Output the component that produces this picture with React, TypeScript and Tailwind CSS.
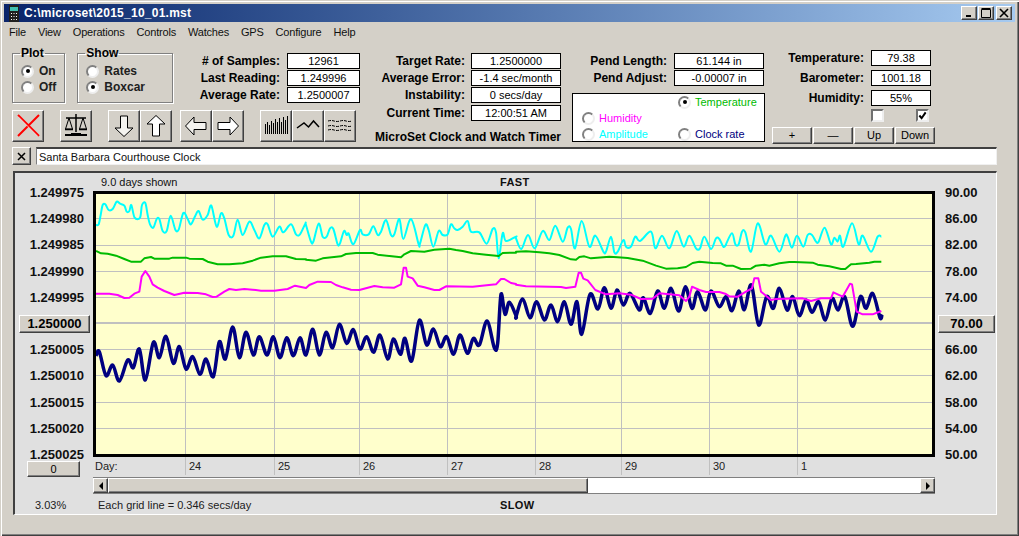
const BEVEL =
  "bg-[#d4d0c8] border border-t-white border-l-white border-r-[#404040] border-b-[#404040] shadow-[inset_-1px_-1px_0_#808080]";
const FONT = "font-['Liberation_Sans',Arial,sans-serif]";

const menus = ["File", "View", "Operations", "Controls", "Watches", "GPS", "Configure", "Help"];
const leftScale = ["1.249975", "1.249980", "1.249985", "1.249990", "1.249995", "1.250000", "1.250005", "1.250010", "1.250015", "1.250020", "1.250025"];
const rightScale = ["90.00", "86.00", "82.00", "78.00", "74.00", "70.00", "66.00", "62.00", "58.00", "54.00", "50.00"];
const days = [
  { label: "24", w: "w-[89px]" },
  { label: "25", w: "w-[85px]" },
  { label: "26", w: "w-[88px]" },
  { label: "27", w: "w-[88px]" },
  { label: "28", w: "w-[86px]" },
  { label: "29", w: "w-[88px]" },
  { label: "30", w: "w-[88px]" },
  { label: "1", w: "w-[138px]" },
];

const gridY = [218, 245, 271, 297, 349, 375, 402, 428];
const gridX = [185, 274, 359, 447, 535, 621, 709, 797];

type Pts = number[][];
// traces were read off 3x crops, each crop starts at ox and y 195
const crop = (ox: number, pts: Pts): Pts => pts.map(([x, y]) => [ox + x / 3, 195 + y / 3]);

const cyan: Pts = [
  ...crop(96, [[0,90],[8,88],[14,60],[20,30],[28,28],[38,45],[50,42],[62,20],[72,26],[85,32],[92,50],[100,48],[106,30],[116,68],[132,68],[138,30],[148,24],[155,60],[162,88],[172,98],[182,72],[190,72],[200,108],[212,108],[224,62],[238,104],[248,104],[262,54],[275,72],[285,88],[298,62],[308,48],[320,74],[335,60],[346,32],[362,95],[375,55],[385,70],[398,120],[412,122],[425,74],[440,120],[460,80],[475,105],[490,130],[505,90],[515,88],[530,125],[550,95],[562,112],[585,88],[600,118],[612,118],[628,86]]),
  ...crop(306, [[0,90],[15,140],[22,140],[38,86],[50,125],[62,125],[72,100],[82,102],[95,148],[102,145],[114,108],[122,120],[128,116],[142,148],[162,105],[170,118],[188,118],[202,94],[215,120],[225,110],[240,75],[255,120],[265,118],[280,72],[292,132],[315,72],[338,148],[342,146],[358,90],[368,105],[382,155],[398,108],[410,120],[425,118],[435,88],[445,100],[455,105],[470,95],[485,78],[495,110],[520,112],[542,146],[560,102],[570,112],[578,190],[590,115],[600,138],[630,125]]),
  ...crop(516, [[0,130],[16,162],[36,120],[56,160],[80,108],[100,135],[118,92],[140,140],[155,98],[165,102],[177,160],[197,78],[220,155],[238,122],[262,170],[270,170],[285,125],[295,172],[305,170],[322,135],[330,155],[345,155],[358,125],[372,138],[405,110],[418,160],[438,122],[460,160],[482,108],[503,155],[520,122],[540,160],[552,160],[565,125],[585,162],[600,130],[610,132],[622,155],[630,150]]),
  ...crop(726, [[0,148],[18,115],[28,148],[38,148],[48,110],[58,112],[75,170],[95,85],[118,148],[135,122],[160,170],[178,122],[185,125],[198,158],[213,122],[232,155],[245,120],[258,120],[270,140],[278,140],[296,98],[315,148],[325,128],[335,140],[342,122],[352,155],[378,85],[398,148],[410,122],[435,170],[455,125],[466,125]]),
];

const green: Pts = [
  ...crop(96, [[0,168],[15,175],[35,176],[60,182],[85,192],[105,200],[135,200],[145,190],[165,186],[175,191],[220,191],[230,188],[270,188],[280,191],[320,192],[335,200],[365,208],[400,208],[440,205],[470,197],[495,188],[530,184],[570,184],[600,192],[630,193]]),
  ...crop(306, [[0,194],[30,197],[50,190],[105,184],[120,177],[150,174],[200,174],[215,179],[285,187],[295,178],[315,168],[355,170],[385,164],[430,161],[450,165],[470,168],[500,175],[540,179],[578,183],[590,174],[630,173]]),
  ...crop(516, [[0,170],[30,169],[70,172],[100,175],[130,180],[165,193],[180,194],[190,186],[205,184],[225,190],[280,185],[305,187],[335,189],[380,197],[420,212],[450,221],[485,220],[510,216],[530,204],[550,200],[590,204],[615,205],[630,212]]),
  ...crop(726, [[0,212],[20,212],[45,222],[75,221],[90,212],[115,209],[130,212],[160,205],[190,201],[205,201],[260,203],[275,209],[310,214],[345,222],[358,222],[375,208],[390,207],[430,203],[445,200],[466,200]]),
];

const magenta: Pts = [
  ...crop(96, [[0,296],[40,296],[65,300],[85,309],[100,308],[115,296],[130,290],[137,245],[148,228],[160,245],[170,268],[185,278],[205,288],[235,300],[265,293],[305,294],[330,298],[350,306],[362,305],[385,290],[400,282],[420,285],[445,282],[470,284],[495,287],[535,287],[575,282],[597,272],[630,279]]),
  ...crop(306, [[0,279],[10,270],[35,260],[75,261],[90,270],[110,277],[135,284],[160,285],[205,273],[230,277],[265,278],[285,268],[293,218],[300,218],[305,245],[320,250],[335,272],[355,277],[385,285],[400,285],[420,274],[500,275],[570,268],[585,252],[595,252],[615,264],[630,267]]),
  ...crop(516, [[0,269],[30,274],[135,276],[150,279],[178,275],[188,233],[195,233],[202,251],[215,256],[238,285],[270,298],[310,295],[345,299],[375,312],[410,311],[430,295],[490,301],[510,318],[520,305],[528,275],[550,285],[570,291],[610,291],[630,297]]),
  ...crop(726, [[0,297],[10,304],[35,305],[60,290],[78,280],[85,250],[97,250],[105,290],[120,302],[135,315],[150,312],[230,310],[255,318],[285,310],[315,310],[322,292],[350,305],[372,266],[378,268],[392,350],[410,358],[440,358],[466,348]]),
];

const navy: Pts = [
  ...crop(96, [[0,482],[10,470],[30,542],[50,510],[70,558],[95,495],[112,518],[130,462],[148,555],[172,442],[190,488],[210,424],[232,505],[250,455],[270,522],[290,485],[312,538],[330,492],[352,545],[370,440],[388,492],[410,396],[430,488],[450,412],[472,480],[490,425],[513,480],[532,425],[552,488],[572,428],[592,482],[612,428]]),
  ...crop(306, [[0,480],[20,403],[40,480],[60,412],[80,458],[100,388],[122,445],[142,404],[162,462],[182,425],[203,472],[222,420],[245,492],[262,432],[283,478],[297,430],[317,498],[340,376],[362,450],[382,402],[403,455],[422,425],[443,478],[462,420],[484,475],[502,430],[520,450],[543,378],[565,458],[575,445],[585,298],[597,358],[610,322],[630,362]]),
  ...crop(516, [[0,365],[20,312],[42,368],[62,320],[85,375],[105,330],[125,380],[145,320],[165,388],[183,320],[197,418],[222,298],[246,342],[265,278],[285,340],[303,285],[322,330],[342,295],[370,345],[382,308],[403,355],[425,288],[445,340],[465,280],[488,348],[508,275],[528,340],[545,290],[568,345],[585,288],[610,335]]),
  ...crop(726, [[0,305],[18,347],[38,288],[55,344],[76,270],[98,390],[122,305],[142,340],[160,280],[183,345],[200,305],[220,362],[240,315],[258,352],[278,320],[298,375],[318,310],[336,345],[356,305],[380,394],[403,305],[420,340],[440,295],[462,368],[468,358]]),
];

const toPoints = (pts: Pts) => pts.map((p) => p.join(",")).join(" ");

// catmull-rom, the navy and cyan traces are rounder than the others
function smooth(pts: Pts) {
  let d = `M${pts[0][0]} ${pts[0][1]}`;
  for (let i = 0; i < pts.length - 1; i++) {
    const a = pts[Math.max(i - 1, 0)];
    const b = pts[i];
    const c = pts[i + 1];
    const e = pts[Math.min(i + 2, pts.length - 1)];
    d += ` C${b[0] + (c[0] - a[0]) / 6} ${b[1] + (c[1] - a[1]) / 6} ${c[0] - (e[0] - b[0]) / 6} ${c[1] - (e[1] - b[1]) / 6} ${c[0]} ${c[1]}`;
  }
  return d;
}

function Field({ label, value, w = "w-[73px]", gap = "gap-[7px]" }: { label: string; value: string; w?: string; gap?: string }) {
  return (
    <div className={`flex justify-end items-center h-[16px] ${gap}`}>
      <span className="text-[12px] leading-[16px] font-bold text-black whitespace-nowrap">{label}</span>
      <div className={`${w} h-[16px] border border-black bg-white flex items-center justify-center text-[11px] leading-[14px] text-black whitespace-nowrap`}>
        {value}
      </div>
    </div>
  );
}

function Radio({ checked }: { checked?: boolean }) {
  return (
    <span className="w-[13px] h-[13px] shrink-0 rounded-full bg-white border-2 border-t-[#808080] border-l-[#808080] border-r-[#eeeeee] border-b-[#eeeeee] flex items-center justify-center">
      {checked && <span className="w-[4px] h-[4px] rounded-full bg-black" />}
    </span>
  );
}

function BoldRadio({ label, checked }: { label: string; checked?: boolean }) {
  return (
    <div className="flex items-center gap-[5px] h-[16px]">
      <Radio checked={checked} />
      <span className="text-[12px] leading-[16px] font-bold text-[#202020]">{label}</span>
    </div>
  );
}

function ColorRadio({ label, color, checked }: { label?: string; color?: string; checked?: boolean }) {
  if (!label) return <div className="h-[16px]" />;
  return (
    <div className="flex items-center gap-[4px] h-[16px]">
      <Radio checked={checked} />
      <span className={`text-[11px] leading-[16px] ${color}`}>{label}</span>
    </div>
  );
}

function Group({ title, w, children }: { title: string; w: string; children: React.ReactNode }) {
  return (
    <fieldset className={`${w} h-[57px] border border-[#808080] shadow-[1px_1px_0_#fff,inset_1px_1px_0_#fff] px-[8px]`}>
      <legend className="text-[12px] font-bold text-black px-[1px] -ml-[1px] leading-[14px]">{title}</legend>
      <div className="pt-[3px]">{children}</div>
    </fieldset>
  );
}

function ToolBtn({ children }: { children: React.ReactNode }) {
  return (
    <button className={`${BEVEL} w-[32px] h-[32px] p-0 flex items-center justify-center`}>
      <svg width="30" height="30" viewBox="1 1 30 30">{children}</svg>
    </button>
  );
}

function SmallBtn({ label, w, h = "h-[17px]", bold }: { label: string; w: string; h?: string; bold?: boolean }) {
  return (
    <button className={`${BEVEL} ${w} ${h} p-0 flex items-center justify-center text-black ${bold ? "text-[13px] font-bold" : "text-[11px]"}`}>
      {label}
    </button>
  );
}

function CheckBox({ checked }: { checked?: boolean }) {
  return (
    <span className="w-[13px] h-[13px] bg-white border-2 border-t-[#707070] border-l-[#707070] border-r-[#eeeeee] border-b-[#eeeeee] flex items-center justify-center">
      {checked && (
        <svg width="9" height="9" viewBox="0 0 10 10">
          <path d="M1.500 5 L4 8 L8.500 1.500" fill="none" stroke="black" strokeWidth="2.200" />
        </svg>
      )}
    </span>
  );
}

function WinBtn({ children }: { children: React.ReactNode }) {
  return (
    <button className={`${BEVEL} w-[16px] h-[14px] p-0 flex items-center justify-center`}>
      <svg width="10" height="10" viewBox="0 0 10 10">{children}</svg>
    </button>
  );
}

function Plot() {
  return (
    <div className="w-[842px] h-[266px] border-[3px] border-black bg-[#ffffcc]">
      <svg width="836" height="260" viewBox="96 194 836 260" className="block">
        {gridY.map((y) => (
          <line key={y} x1="96" x2="932" y1={y} y2={y} stroke="#c0c0c0" strokeWidth="1" shapeRendering="crispEdges" />
        ))}
        <line x1="96" x2="932" y1="323" y2="323" stroke="#c0c0c0" strokeWidth="2" shapeRendering="crispEdges" />
        {gridX.map((x) => (
          <line key={x} x1={x} x2={x} y1="194" y2="454" stroke="#c0c0c0" strokeWidth="1" shapeRendering="crispEdges" />
        ))}
        <path d={smooth(cyan)} fill="none" stroke="#00ffff" strokeWidth="2" strokeLinejoin="round" />
        <polyline points={toPoints(green)} fill="none" stroke="#00bb00" strokeWidth="2" strokeLinejoin="round" />
        <path d={smooth(navy)} fill="none" stroke="#000080" strokeWidth="3.500" strokeLinejoin="round" />
        <polyline points={toPoints(magenta)} fill="none" stroke="#ff00ff" strokeWidth="2" strokeLinejoin="round" />
      </svg>
    </div>
  );
}

export default function App() {
  return (
    <div className={`${FONT} w-[1019px] h-[536px] overflow-hidden bg-[#d4d0c8] pt-[4px] px-[4px] shadow-[inset_1px_1px_0_#d4d0c8,inset_2px_2px_0_#ffffff,inset_-1px_-1px_0_#404040,inset_-2px_-2px_0_#808080]`}>
      {/* title bar */}
      <div className="w-[1011px] h-[18px] bg-gradient-to-r from-[#0a246a] to-[#a6caf0] flex items-center pl-[4px] pr-[3px]">
        <svg width="12" height="17" viewBox="0 0 12 17" className="shrink-0">
          <rect x="1" y="0" width="10" height="17" fill="#202020" />
          <rect x="2" y="2" width="8" height="4" fill="#40c0b0" />
          <path d="M3 8h1v1H3zM5.500 8h1v1h-1zM8 8h1v1H8zM3 11h1v1H3zM5.500 11h1v1h-1zM8 11h1v1H8zM3 14h1v1H3zM5.500 14h1v1h-1zM8 14h1v1H8z" fill="#ffffff" />
        </svg>
        <span className="ml-[4px] text-[12px] font-bold text-white whitespace-nowrap tracking-[0.25px]">C:\microset\2015_10_01.mst</span>
        <div className="ml-auto flex">
          <WinBtn><rect x="2" y="7" width="5" height="2" fill="black" /></WinBtn>
          <div className="ml-[1px]">
            <WinBtn><path d="M0.500 1.500h9v8h-9zM0.500 0.500h9" fill="none" stroke="black" /></WinBtn>
          </div>
          <div className="ml-[2px]">
            <WinBtn><path d="M1 1 L9 9 M9 1 L1 9" stroke="black" strokeWidth="1.600" /></WinBtn>
          </div>
        </div>
      </div>

      {/* menu */}
      <div className="h-[20px] flex items-center pl-[5px] gap-[12px] text-[11px] tracking-[-0.2px] text-[#101010]">
        {menus.map((m) => (
          <span key={m}>{m}</span>
        ))}
      </div>

      {/* controls */}
      <div className="flex items-start h-[101px] pl-[8px] mt-[4px]">
        <div className="w-[348px]">
          <div className="flex h-[57px]">
            <Group title="Plot" w="w-[52px]">
              <BoldRadio label="On" checked />
              <BoldRadio label="Off" />
            </Group>
            <div className="ml-[12px]">
              <Group title="Show" w="w-[96px]">
                <BoldRadio label="Rates" />
                <BoldRadio label="Boxcar" checked />
              </Group>
            </div>
            <div className="flex-1 pt-[7px] flex flex-col gap-[1px]">
              <Field label="# of Samples:" value="12961" />
              <Field label="Last Reading:" value="1.249996" />
              <Field label="Average Rate:" value="1.2500007" />
            </div>
          </div>
          <div className="flex mt-[7px]">
            <ToolBtn>
              <path d="M6 5 L27 26 M27 5 L6 26" stroke="#ff0000" strokeWidth="2" />
              <path d="M6 6.500 L26 26.500" stroke="#ffffff" strokeWidth="0.600" />
            </ToolBtn>
            <div className="ml-[16px]">
              <ToolBtn>
                <path d="M16 4 V22 M6 8 H26" stroke="black" strokeWidth="1.500" fill="none" />
                <path d="M9 8 L5.500 19 H12.500 Z M23 8 L19.500 19 H26.500 Z" stroke="black" fill="none" />
                <path d="M5 19.500 H13 M19 19.500 H27" stroke="black" strokeWidth="1.500" />
                <path d="M5 24 H27 V26 H5 Z" fill="black" />
                <path d="M11 23 H21 V24 H11 Z" fill="black" />
              </ToolBtn>
            </div>
            <div className="ml-[16px] flex">
              <ToolBtn>
                <polygon points="12.500,6 19.500,6 19.500,18 25,18 16,26.500 7,18 12.500,18" fill="#f4f3ef" stroke="black" />
              </ToolBtn>
              <ToolBtn>
                <polygon points="12.500,26 19.500,26 19.500,14 25,14 16,5.500 7,14 12.500,14" fill="#ffffff" stroke="black" />
              </ToolBtn>
            </div>
            <div className="ml-[8px] flex">
              <ToolBtn>
                <polygon points="26,12.500 26,19.500 14,19.500 14,25 5.500,16 14,7 14,12.500" fill="#f4f3ef" stroke="black" />
              </ToolBtn>
              <ToolBtn>
                <polygon points="6,12.500 6,19.500 18,19.500 18,25 26.500,16 18,7 18,12.500" fill="#ffffff" stroke="black" />
              </ToolBtn>
            </div>
            <div className="ml-[16px] flex">
              <ToolBtn>
                <path
                  d="M5.500 24V14 M7.500 24V12 M9.500 24V15 M11.500 24V11 M13.500 24V13 M15.500 24V9 M17.500 24V12 M19.500 24V8 M21.500 24V12 M23.500 24V7 M25.500 24V10 M27.500 24V6"
                  stroke="black"
                  fill="none"
                />
              </ToolBtn>
              <ToolBtn>
                <polyline points="5,18 12,13 16.500,17 21.500,11 27,17" stroke="black" strokeWidth="1.500" fill="none" />
              </ToolBtn>
              <ToolBtn>
                <path
                  d="M4 11 q3 -1 6 0 t6 0 t6 0 t6 0 M4 16 q3 -1 6 0 t6 0 t6 0 t6 0 M4 20 q3 -1 6 0 t6 0 t6 0 t6 0"
                  stroke="black"
                  strokeDasharray="3 1"
                  fill="none"
                />
              </ToolBtn>
            </div>
          </div>
        </div>

        <div className="w-[197px] ml-[4px] pt-[7px] flex flex-col gap-[1px]">
          <Field label="Target Rate:" value="1.2500000" w="w-[90px]" gap="gap-[6px]" />
          <Field label="Average Error:" value="-1.4 sec/month" w="w-[90px]" gap="gap-[6px]" />
          <Field label="Instability:" value="0 secs/day" w="w-[90px]" gap="gap-[6px]" />
          <div className="mt-[1px]">
            <Field label="Current Time:" value="12:00:51 AM" w="w-[90px]" gap="gap-[6px]" />
          </div>
          <div className="mt-[8px] text-[12px] leading-[14px] font-bold text-black text-right whitespace-nowrap">
            MicroSet Clock and Watch Timer
          </div>
        </div>

        <div className="w-[193px] ml-[11px] pt-[7px] flex flex-col gap-[1px]">
          <div className="pr-[1px] flex flex-col gap-[1px]">
            <Field label="Pend Length:" value="61.144 in" w="w-[90px]" />
            <Field label="Pend Adjust:" value="-0.00007 in" w="w-[90px]" />
          </div>
          <div className="mt-[6px] h-[49px] border border-black bg-white grid grid-cols-[96px_1fr] pl-[9px]">
            <ColorRadio />
            <ColorRadio label="Temperature" color="text-[#00bb00]" checked />
            <ColorRadio label="Humidity" color="text-[#ff00ff]" />
            <ColorRadio />
            <ColorRadio label="Amplitude" color="text-[#00ffff]" />
            <ColorRadio label="Clock rate" color="text-[#000080]" />
          </div>
        </div>

        <div className="w-[163px] ml-[7px] pt-[4px]">
          <div className="pr-[4px] flex flex-col gap-[4px]">
            <Field label="Temperature:" value="79.38" w="w-[60px]" />
            <Field label="Barometer:" value="1001.18" w="w-[60px]" />
            <Field label="Humidity:" value="55%" w="w-[60px]" />
          </div>
          <div className="flex mt-[3px] pl-[99px] gap-[32px]">
            <CheckBox />
            <CheckBox checked />
          </div>
          <div className="flex gap-[1px] mt-[5px]">
            <SmallBtn label="+" w="w-[40px]" />
            <SmallBtn label="—" w="w-[40px]" />
            <SmallBtn label="Up" w="w-[40px]" />
            <SmallBtn label="Down" w="w-[40px]" />
          </div>
        </div>
      </div>

      {/* note line */}
      <div className="flex items-center gap-[5px] pl-[8px]">
        <button className={`${BEVEL} w-[19px] h-[18px] p-0 flex items-center justify-center`}>
          <svg width="9" height="9" viewBox="0 0 9 9">
            <path d="M1 1 L8 8 M8 1 L1 8" stroke="black" strokeWidth="1.500" />
          </svg>
        </button>
        <div className="w-[961px] h-[18px] bg-white border-t-2 border-l border-t-[#404040] border-l-[#808080] border-r border-b border-r-[#f0f0f0] border-b-[#f0f0f0] pl-[2px] text-[11px] leading-[16px] text-[#101010]">
          Santa Barbara Courthouse Clock
        </div>
      </div>

      {/* chart panel */}
      <div className="w-[984px] h-[344px] ml-[9px] mt-[6px] bg-[#e0e0e0] border-t-2 border-l-2 border-t-[#404040] border-l-[#404040] border-r border-b border-r-white border-b-white flex">
        <div className="w-[78px] shrink-0 pt-[13px] flex flex-col">
          <div className="flex flex-col items-end gap-[12.2px] pr-[9px] h-[275px]">
            {leftScale.map((v) =>
              v === "1.250000" ? (
                <div key={v} className="-my-[2px] -mr-[6px]">
                  <SmallBtn label={v} w="w-[71px]" h="h-[18px]" bold />
                </div>
              ) : (
                <span key={v} className="h-[14px] leading-[14px] text-[13px] font-bold text-[#101010]">{v}</span>
              ),
            )}
          </div>
          <div className="ml-[12px]">
            <SmallBtn label="0" w="w-[53px]" h="h-[16px]" />
          </div>
          <div className="mt-[21px] pl-[20px] text-[11px] leading-[14px] text-[#202020]">3.03%</div>
        </div>

        <div className="w-[842px] shrink-0 flex flex-col">
          <div className="h-[18px] flex items-center text-[#101010]">
            <span className="w-[407px] pl-[8px] text-[11px]">9.0 days shown</span>
            <span className="text-[11px] font-bold tracking-[0.4px]">FAST</span>
          </div>
          <Plot />
          <div className="h-[18px] flex text-[11px] text-[#202020]">
            <div className="w-[92px] pl-[2px] pt-[1px]">Day:</div>
            {days.map((d) => (
              <div key={d.label} className={`${d.w} border-l border-l-[#c0c0c0] pl-[3px] pt-[1px]`}>
                {d.label}
              </div>
            ))}
          </div>
          <div className="h-[17px] mt-[2px] flex border-t border-b border-t-[#808080] border-b-[#808080]">
            <button className={`${BEVEL} w-[15px] p-0 flex items-center justify-center`}>
              <svg width="6" height="8" viewBox="0 0 6 8"><path d="M5 0 V8 L1 4 Z" fill="black" /></svg>
            </button>
            <div className={`${BEVEL} w-[480px]`} />
            <div className="flex-1 bg-white" />
            <button className={`${BEVEL} w-[15px] p-0 flex items-center justify-center`}>
              <svg width="6" height="8" viewBox="0 0 6 8"><path d="M1 0 V8 L5 4 Z" fill="black" /></svg>
            </button>
          </div>
          <div className="mt-[4px] h-[14px] flex items-center text-[11px] text-[#202020]">
            <span className="w-[407px] pl-[5px]">Each grid line = 0.346 secs/day</span>
            <span className="font-bold tracking-[0.4px] text-[#101010]">SLOW</span>
          </div>
        </div>

        <div className="flex-1 pt-[13px] pl-[3px]">
          <div className="flex flex-col gap-[12.2px]">
            {rightScale.map((v) =>
              v === "70.00" ? (
                <div key={v} className="-my-[2px]">
                  <SmallBtn label={v} w="w-[57px]" h="h-[18px]" bold />
                </div>
              ) : (
                <span key={v} className="h-[14px] leading-[14px] pl-[7px] text-[13px] font-bold text-[#101010]">{v}</span>
              ),
            )}
          </div>
        </div>
      </div>
    </div>
  );
}
